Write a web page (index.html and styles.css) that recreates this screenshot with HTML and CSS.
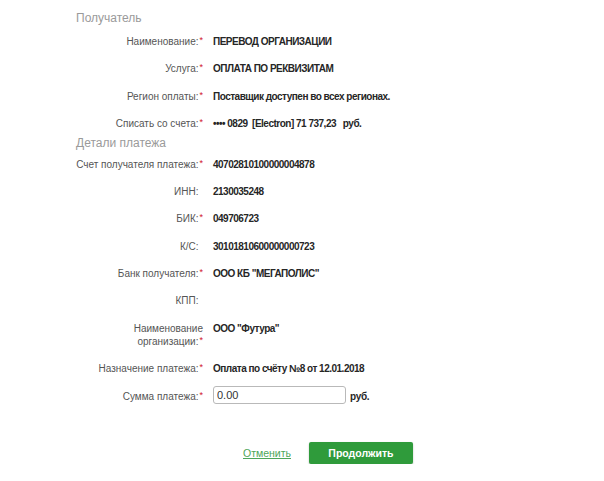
FILE: index.html
```html
<!DOCTYPE html>
<html lang="ru">
<head>
<meta charset="utf-8">
<link rel="stylesheet" href="styles.css">
</head>
<body>
<div class="page">
  <h2 class="section-title first">Получатель</h2>
  <div class="form">
    <div class="label">Наименование:<span class="req">*</span></div>
    <div class="value">ПЕРЕВОД ОРГАНИЗАЦИИ</div>
    <div class="label">Услуга:<span class="req">*</span></div>
    <div class="value">ОПЛАТА ПО РЕКВИЗИТАМ</div>
    <div class="label">Регион оплаты:<span class="req">*</span></div>
    <div class="value">Поставщик доступен во всех регионах.</div>
    <div class="label">Списать со счета:<span class="req">*</span></div>
    <div class="value">•••• 0829&nbsp; [Electron] 71 737,23 &nbsp; руб.</div>
  </div>
  <h2 class="section-title second">Детали платежа</h2>
  <div class="form form2">
    <div class="label">Счет получателя платежа:<span class="req">*</span></div>
    <div class="value">40702810100000004878</div>
    <div class="label">ИНН:<span class="req none">*</span></div>
    <div class="value">2130035248</div>
    <div class="label">БИК:<span class="req">*</span></div>
    <div class="value">049706723</div>
    <div class="label">К/С:<span class="req none">*</span></div>
    <div class="value">30101810600000000723</div>
    <div class="label">Банк получателя:<span class="req">*</span></div>
    <div class="value">ООО КБ "МЕГАПОЛИС"</div>
    <div class="label">КПП:<span class="req none">*</span></div>
    <div class="value"></div>
    <div class="label">Наименование<br>организации:<span class="req">*</span></div>
    <div class="value">ООО "Футура"</div>
    <div class="label">Назначение платежа:<span class="req">*</span></div>
    <div class="value">Оплата по счёту №8 от 12.01.2018</div>
    <div class="label">Сумма платежа:<span class="req">*</span></div>
    <div class="value amount"><input class="amount-input" type="text" value="0.00"><span class="currency">руб.</span></div>
  </div>
  <div class="actions">
    <a class="cancel" href="#">Отменить</a>
    <button class="submit" type="button">Продолжить</button>
  </div>
</div>
</body>
</html>
```
FILE: styles.css
```css
html, body {
  margin: 0;
  padding: 0;
  background: #ffffff;
}
body {
  font-family: "Liberation Sans", Arial, sans-serif;
  font-size: 10px;
  color: #333;
}
.page {
  padding: 10px 0 0 76px;
}
.section-title {
  margin: 0;
  font-size: 12px;
  line-height: 16px;
  font-weight: normal;
  color: #9a9a9a;
}
.section-title.second {
  margin-top: 5px;
}
.form {
  display: grid;
  grid-template-columns: 140px auto;
  column-gap: 10px;
  row-gap: 14.5px;
  margin: 8.5px 0 0 -13px;
  line-height: 13px;
}
.form2 {
  row-gap: 14.4px;
  margin-top: 6.5px;
}
.label {
  text-align: right;
  white-space: nowrap;
  color: #555555;
}
.req {
  color: #d0112b;
  font-size: 9px;
  vertical-align: top;
  position: relative;
  top: -1px;
  margin-left: 1px;
}
.req.none {
  visibility: hidden;
}
.value {
  font-weight: bold;
  letter-spacing: -0.5px;
  white-space: nowrap;
  color: #262626;
}
.amount {
  display: flex;
  align-items: center;
  letter-spacing: 0;
}
.amount-input {
  box-sizing: border-box;
  width: 133px;
  height: 18px;
  margin: -3.5px 0 -1.5px 0;
  padding: 0 3px;
  border: 1px solid #b9b9b9;
  border-radius: 3px;
  font-family: "Liberation Sans", Arial, sans-serif;
  font-size: 11px;
  color: #333;
  outline: none;
}
.currency {
  margin-left: 4px;
  font-weight: bold;
  letter-spacing: -0.3px;
}
.actions {
  display: flex;
  align-items: center;
  margin: 39px 0 0 167px;
  gap: 18px;
}
.cancel {
  color: #4ea65a;
  font-size: 10.5px;
  text-decoration: underline;
}
.submit {
  width: 104px;
  height: 22px;
  border: none;
  border-radius: 2px;
  background: #2f9b3b;
  color: #fff;
  font-family: "Liberation Sans", Arial, sans-serif;
  font-size: 10.5px;
  font-weight: bold;
  box-shadow: 0 1px 2px rgba(0,0,0,0.25);
  cursor: pointer;
}
```
